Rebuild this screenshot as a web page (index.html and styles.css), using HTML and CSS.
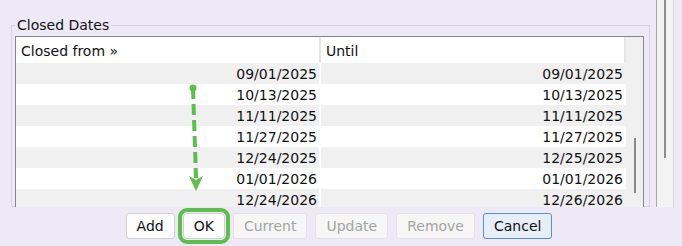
FILE: index.html
```html
<!DOCTYPE html>
<html lang="en">

<head>
    <meta charset="UTF-8">
    <meta name="viewport" content="width=device-width, initial-scale=1.0">
    <title>Closed Dates</title>
    <link rel="stylesheet" href="styles.css">
</head>

<body>
    <div class="dialog">
        <div class="main">
            <fieldset class="group">
                <legend>Closed Dates</legend>
                <div class="list">
                    <div class="cols">
                        <div class="head">
                            <div class="hcell">Closed from »</div>
                            <div class="hcell">Until</div>
                        </div>
                        <div class="row odd"><div class="cell">09/01/2025</div><div class="cell">09/01/2025</div></div>
                        <div class="row"><div class="cell">10/13/2025</div><div class="cell">10/13/2025</div></div>
                        <div class="row odd"><div class="cell">11/11/2025</div><div class="cell">11/11/2025</div></div>
                        <div class="row"><div class="cell">11/27/2025</div><div class="cell">11/27/2025</div></div>
                        <div class="row odd"><div class="cell">12/24/2025</div><div class="cell">12/25/2025</div></div>
                        <div class="row"><div class="cell">01/01/2026</div><div class="cell">01/01/2026</div></div>
                        <div class="row odd"><div class="cell">12/24/2026</div><div class="cell">12/26/2026</div></div>
                    </div>
                    <div class="vscroll"><div class="thumb"></div></div>
                </div>
            </fieldset>
            <div class="side">
                <div class="rail"></div>
                <div class="track"><div class="thumb"></div></div>
                <div class="edge"></div>
            </div>
        </div>

        <div class="buttons">
            <button class="btn">Add</button>
            <button class="btn marked">OK</button>
            <button class="btn" disabled>Current</button>
            <button class="btn" disabled>Update</button>
            <button class="btn" disabled>Remove</button>
            <button class="btn default">Cancel</button>
        </div>

        <!-- drag hint -->
        <svg class="hint" width="682" height="246" viewBox="0 0 682 246">
            <line x1="193" y1="88" x2="196" y2="178" stroke="#5dbf4b" stroke-width="4" stroke-dasharray="11 5"/>
            <circle cx="193" cy="88" r="3.5" fill="#5dbf4b"/>
            <polygon points="189,176 196,180 203,176 196,191" fill="#5dbf4b"/>
        </svg>
    </div>
</body>

</html>
```

FILE: styles.css
```css
* {
    box-sizing: border-box;
}

body {
    margin: 0;
    font-family: "DejaVu Sans", Verdana, sans-serif;
    font-size: 14px;
    color: #111;
    background-color: #eee9f6;
}

.dialog {
    position: relative;
    width: 682px;
    height: 246px;
    overflow: hidden;
}

.main {
    display: flex;
    height: 207px;
    padding-left: 11px;
    overflow: hidden;
}

.group {
    width: 639px;
    min-width: 0;
    margin: 17px 0 0;
    padding: 2px 5px 0 3px;
    border: 1px solid #d8d3df;
}

.group legend {
    padding: 0 2px;
    line-height: 17px;
}

.list {
    display: flex;
    height: 260px;
    border: 1px solid #828790;
    border-bottom: none;
    background-color: #fff;
}

.cols {
    width: 610px;
}

.head {
    display: grid;
    grid-template-columns: 303px 303px;
    column-gap: 2px;
    height: 26px;
    background-color: #e6e6e6;
}

.hcell {
    padding: 2px 0 0 5px;
    line-height: 24px;
    background-color: #fff;
}

.row {
    display: grid;
    grid-template-columns: 303px 305px;
    column-gap: 2px;
    height: 21px;
}

.cell {
    padding: 2px 2px 0 0;
    line-height: 19px;
    text-align: right;
}

.cell + .cell {
    padding-right: 3px;
}

.row.odd .cell {
    background-color: #f0f0f0;
}

.vscroll {
    width: 17px;
    background-color: #f0f0f0;
}

.vscroll .thumb {
    width: 2px;
    height: 55px;
    margin: 101px 0 0 8px;
    background-color: #8a8a8a;
}

.side {
    display: flex;
    width: 32px;
    padding-left: 6px;
}

.rail {
    width: 1px;
    background-color: #a8a8a8;
}

.track {
    width: 16px;
    background-color: #f3f3f3;
}

.track .thumb {
    width: 2px;
    height: 158px;
    margin-left: 7px;
    background-color: #8c8c8c;
}

.edge {
    width: 1px;
    background-color: #d9d6de;
}

.buttons {
    display: flex;
    justify-content: center;
    gap: 8px;
    padding: 6px 4px 0 0;
}

.btn {
    height: 26px;
    padding: 0 10px;
    font-family: inherit;
    font-size: 14px;
    line-height: 24px;
    color: #111;
    background-color: #fdfdfd;
    border: 1px solid #cfcfcf;
    border-radius: 3px;
}

.btn:disabled {
    color: #a3a3a3;
    background-color: #f6f6f6;
    border-color: #e3e3e3;
}

.btn.default {
    background-color: #e6eef9;
    border-color: #5a8fcc;
}

.btn.marked {
    outline: 4px solid #5dbf4b;
    outline-offset: 1px;
    border-radius: 4px;
}

.hint {
    position: absolute;
    top: 0;
    left: 0;
    pointer-events: none;
}
```
